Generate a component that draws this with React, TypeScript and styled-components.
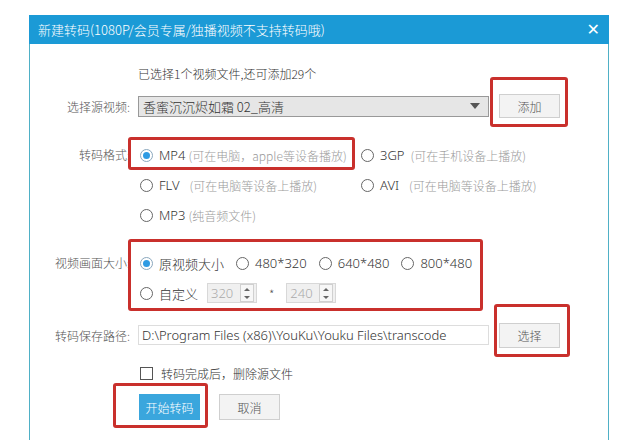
import React from 'react';
import styled, { createGlobalStyle } from 'styled-components';

const GlobalStyle = createGlobalStyle`
  html, body {
    margin: 0;
    padding: 0;
    background: #fff;
  }
  body {
    font-family: "Noto Sans CJK SC", "Noto Sans", sans-serif;
    font-size: 12px;
    font-weight: 300;
    color: #333;
  }
`;

const Page = styled.div`
  position: relative;
  width: 635px;
  height: 440px;
  overflow: hidden;
  padding-top: 15px;
  box-sizing: border-box;
`;

const Dialog = styled.div`
  margin-left: 29px;
  width: 580px;
  height: 440px;
  background: #fff;
  border-left: 1px solid #4fb0c6;
  border-right: 1px solid #4fb0c6;
  box-sizing: border-box;
`;

const TitleBar = styled.div`
  height: 29px;
  margin: 0 -1px;
  background: #1b9ad6;
  color: #fff;
  display: flex;
  align-items: center;
  justify-content: space-between;
  padding: 0 9px;
  font-size: 13px;
`;

const Close = styled.span`
  font-family: "DejaVu Sans", sans-serif;
  font-size: 16px;
  font-weight: bold;
  line-height: 1;
`;

const Body = styled.div`
  padding-top: 21px;
  display: flex;
  flex-direction: column;
`;

const Row = styled.div<{ $top?: number; $h?: number }>`
  display: flex;
  align-items: center;
  margin-top: ${(p) => p.$top ?? 0}px;
  height: ${(p) => p.$h ?? 30}px;
`;

const Block = styled.div<{ $top?: number }>`
  display: flex;
  align-items: flex-start;
  margin-top: ${(p) => p.$top ?? 0}px;
`;

const Label = styled.div<{ $lh?: number }>`
  width: 100px;
  text-align: right;
  color: #555;
  flex-shrink: 0;
  white-space: nowrap;
  line-height: ${(p) => (p.$lh ? `${p.$lh}px` : 'normal')};
`;

const Field = styled.div`
  margin-left: 8px;
  display: flex;
  align-items: center;
`;

const Info = styled.div`
  margin-left: 108px;
  height: 18px;
  line-height: 18px;
  color: #333;
`;

const Select = styled.div`
  width: 351px;
  height: 21px;
  box-sizing: border-box;
  background: #e6e6e6;
  border: 1px solid #999;
  display: flex;
  align-items: center;
  justify-content: space-between;
  padding: 0 8px 0 4px;
  font-size: 13px;
  color: #333;
`;

const Caret = styled.span`
  width: 0;
  height: 0;
  border-left: 5px solid transparent;
  border-right: 5px solid transparent;
  border-top: 6px solid #555;
`;

const Button = styled.button<{ $primary?: boolean; $h?: number; $ml?: number }>`
  width: 61px;
  height: ${(p) => p.$h ?? 24}px;
  margin-left: ${(p) => p.$ml ?? 10}px;
  box-sizing: border-box;
  font-family: inherit;
  font-weight: 300;
  font-size: 12px;
  padding: 0;
  background: ${(p) => (p.$primary ? '#3aa6dd' : '#f3f3f3')};
  color: ${(p) => (p.$primary ? '#fff' : '#555')};
  border: 1px solid ${(p) => (p.$primary ? '#3aa6dd' : '#cfcfcf')};
`;

const FormatGrid = styled.div`
  margin-left: 8px;
  display: grid;
  grid-template-columns: 221px auto;
  grid-auto-rows: 30px;
  align-items: center;
`;

const Option = styled.label<{ $gap?: number }>`
  display: flex;
  align-items: center;
  margin-right: ${(p) => p.$gap ?? 0}px;
  white-space: nowrap;
`;

const RadioDot = styled.span<{ $on?: boolean }>`
  width: 13px;
  height: 13px;
  margin-left: 2px;
  box-sizing: border-box;
  border-radius: 50%;
  border: 1px solid ${(p) => (p.$on ? '#8aa7bd' : '#666')};
  background: #fff;
  display: inline-flex;
  align-items: center;
  justify-content: center;
  flex-shrink: 0;

  &::after {
    content: '';
    width: 7px;
    height: 7px;
    border-radius: 50%;
    background: ${(p) => (p.$on ? '#2f9be3' : 'transparent')};
  }
`;

const OptName = styled.span`
  margin-left: 6px;
  font-family: "Noto Sans", "Noto Sans CJK SC", sans-serif;
  font-size: 13px;
  color: #333;
`;

const Hint = styled.span<{ $gap?: number }>`
  margin-left: ${(p) => p.$gap ?? 3}px;
  font-size: 12px;
  color: #9a9a9a;
`;

const SizeBlock = styled.div`
  display: flex;
  flex-direction: column;
`;

const Spin = styled.div`
  width: 50px;
  height: 20px;
  box-sizing: border-box;
  background: #f0f0f0;
  border: 1px solid #d8d8d8;
  display: flex;
  align-items: center;
  justify-content: space-between;
  padding-left: 3px;
  font-family: "Noto Sans", sans-serif;
  font-size: 13px;
  color: #aaa;
`;

const SpinArrows = styled.div`
  width: 12px;
  height: 16px;
  margin-right: 2px;
  border: 1px solid #d0d0d0;
  background: #f7f7f7;
  display: flex;
  flex-direction: column;
  align-items: center;
  justify-content: space-around;
`;

const Tri = styled.span<{ $up?: boolean }>`
  width: 0;
  height: 0;
  border-left: 3px solid transparent;
  border-right: 3px solid transparent;
  ${(p) => (p.$up ? 'border-bottom: 3px solid #666;' : 'border-top: 3px solid #666;')}
`;

const Times = styled.span`
  margin: 0 12px;
  color: #555;
`;

const PathInput = styled.div`
  width: 351px;
  height: 20px;
  box-sizing: border-box;
  border: 1px solid #ddd;
  background: #fff;
  display: flex;
  align-items: center;
  padding-left: 3px;
  font-family: "Noto Sans", sans-serif;
  font-size: 13px;
  color: #333;
  white-space: nowrap;
`;

const CheckBox = styled.span`
  width: 11px;
  height: 11px;
  margin-left: 2px;
  border: 1px solid #555;
  background: #fff;
`;

const CheckText = styled.span`
  margin-left: 8px;
  font-size: 12px;
  color: #333;
`;

const Actions = styled.div`
  margin-left: 109px;
  display: flex;
  gap: 19px;
  margin-top: 11px;
`;

const Mark = styled.div<{ $x: number; $y: number; $w: number; $h: number }>`
  position: absolute;
  left: ${(p) => p.$x}px;
  top: ${(p) => p.$y}px;
  width: ${(p) => p.$w}px;
  height: ${(p) => p.$h}px;
  box-sizing: border-box;
  border: 3px solid #c9302c;
  border-radius: 3px;
  pointer-events: none;
`;

const Radio = ({ on, name, hint, hintGap, gap }: { on?: boolean; name: string; hint?: string; hintGap?: number; gap?: number }) => (
  <Option $gap={gap}>
    <RadioDot $on={on} />
    <OptName>{name}</OptName>
    {hint && <Hint $gap={hintGap}>{hint}</Hint>}
  </Option>
);

const SpinBox = ({ value }: { value: string }) => (
  <Spin>
    {value}
    <SpinArrows>
      <Tri $up />
      <Tri />
    </SpinArrows>
  </Spin>
);

export default function App() {
  return (
    <Page>
      <GlobalStyle />
      <Dialog>
        <TitleBar>
          <span>新建转码(1080P/会员专属/独播视频不支持转码哦)</span>
          <Close>✕</Close>
        </TitleBar>
        <Body>
          <Info>已选择1个视频文件,还可添加29个</Info>

          <Row $top={11} $h={24}>
            <Label>选择源视频:</Label>
            <Field>
              <Select>
                <span>香蜜沉沉烬如霜 02_高清</span>
                <Caret />
              </Select>
              <Button>添加</Button>
            </Field>
          </Row>

          <Block $top={22}>
            <Label $lh={30}>转码格式:</Label>
            <FormatGrid>
              <Radio on name="MP4" hint="(可在电脑，apple等设备播放)" />
              <Radio name="3GP" hint="(可在手机设备上播放)" hintGap={6} />
              <Radio name="FLV" hint="(可在电脑等设备上播放)" hintGap={10} />
              <Radio name="AVI" hint="(可在电脑等设备上播放)" hintGap={10} />
              <Radio name="MP3" hint="(纯音频文件)" />
            </FormatGrid>
          </Block>

          <Block $top={18}>
            <Label $lh={30}>视频画面大小:</Label>
            <Field>
              <SizeBlock>
                <Row>
                  <Radio on name="原视频大小" gap={10} />
                  <Radio name="480*320" gap={10} />
                  <Radio name="640*480" gap={10} />
                  <Radio name="800*480" />
                </Row>
                <Row>
                  <Radio name="自定义" gap={9} />
                  <SpinBox value="320" />
                  <Times>*</Times>
                  <SpinBox value="240" />
                </Row>
              </SizeBlock>
            </Field>
          </Block>

          <Row $top={14} $h={26}>
            <Label>转码保存路径:</Label>
            <Field>
              <PathInput>D:\Program Files (x86)\YouKu\Youku Files\transcode</PathInput>
              <Button $h={25}>选择</Button>
            </Field>
          </Row>

          <Row $top={15} $h={20}>
            <Label />
            <Field>
              <CheckBox />
              <CheckText>转码完成后，删除源文件</CheckText>
            </Field>
          </Row>

          <Actions>
            <Button $primary $h={26} $ml={0}>开始转码</Button>
            <Button $h={26} $ml={0}>取消</Button>
          </Actions>
        </Body>
      </Dialog>

      <Mark $x={490} $y={77} $w={78} $h={50} />
      <Mark $x={128} $y={137} $w={227} $h={33} />
      <Mark $x={128} $y={239} $w={355} $h={72} />
      <Mark $x={494} $y={304} $w={76} $h={53} />
      <Mark $x={113} $y={383} $w={95} $h={45} />
    </Page>
  );
}
